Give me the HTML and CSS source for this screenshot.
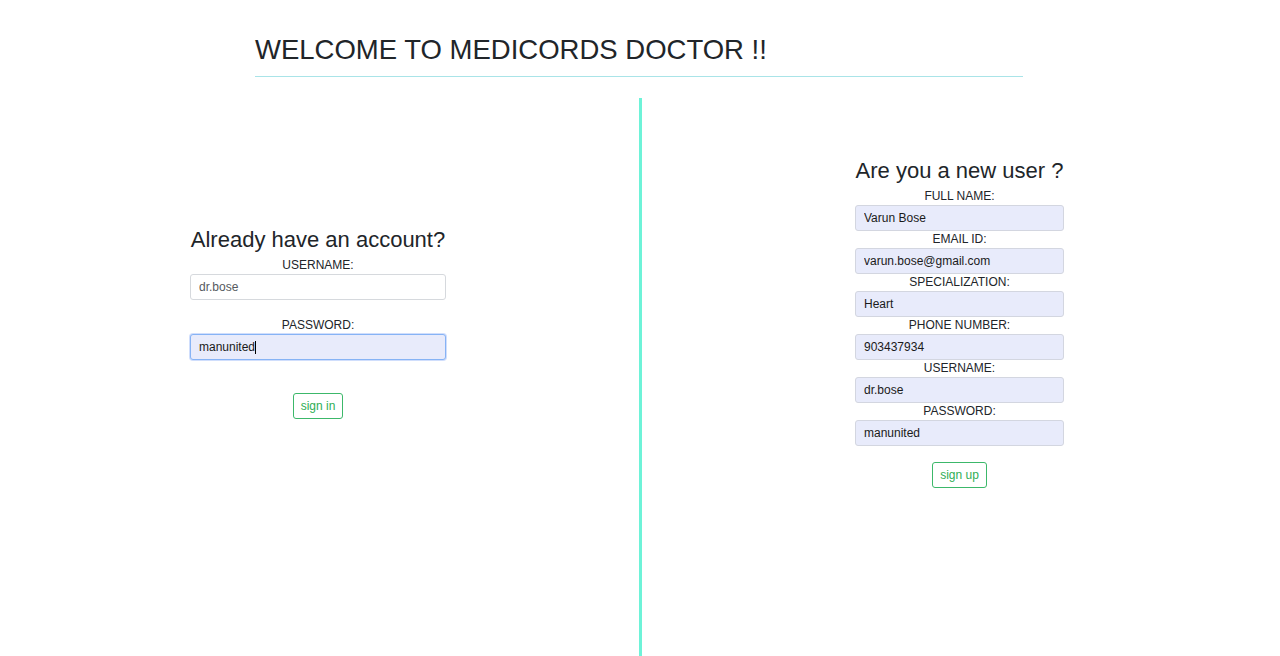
FILE: index.html
```html
<!DOCTYPE html>
<html>
<head>
<meta charset="utf-8">
<title>Medicords Doctor</title>
<link rel="stylesheet" href="styles.css">
</head>
<body>
<header class="header">
  <h1 class="title">WELCOME TO MEDICORDS DOCTOR !!</h1>
</header>
<main class="main">
  <section class="col col-left">
    <form class="form form-login">
      <h2 class="form-title">Already have an account?</h2>
      <label class="label">USERNAME:</label>
      <input class="field field-plain" type="text" value="dr.bose">
      <label class="label label-spaced">PASSWORD:</label>
      <div class="field field-focus">manunited<span class="caret"></span></div>
      <button class="btn btn-login" type="button">sign in</button>
    </form>
  </section>
  <div class="divider"></div>
  <section class="col col-right">
    <form class="form form-signup">
      <h2 class="form-title">Are you a new user ?</h2>
      <label class="label">FULL NAME:</label>
      <input class="field" type="text" value="Varun Bose">
      <label class="label">EMAIL ID:</label>
      <input class="field" type="text" value="varun.bose@gmail.com">
      <label class="label">SPECIALIZATION:</label>
      <input class="field" type="text" value="Heart">
      <label class="label">PHONE NUMBER:</label>
      <input class="field" type="text" value="903437934">
      <label class="label">USERNAME:</label>
      <input class="field" type="text" value="dr.bose">
      <label class="label">PASSWORD:</label>
      <input class="field" type="text" value="manunited">
      <button class="btn btn-signup" type="button">sign up</button>
    </form>
  </section>
</main>
</body>
</html>
```

FILE: styles.css
```css
html, body {
  margin: 0;
  padding: 0;
  background: #ffffff;
  overflow: hidden;
}

body {
  font-family: "Liberation Sans", Arial, sans-serif;
  color: #212529;
}

.header {
  width: 60%;
  margin-left: calc(20% - 1px);
  padding-top: 34px;
  padding-bottom: 10px;
  border-bottom: 1px solid #a9e4e8;
  box-sizing: border-box;
  height: 77px;
}

.title {
  margin: 0;
  font-size: 27.5px;
  line-height: 32px;
  font-weight: 400;
  color: #212529;
}

.main {
  display: flex;
  margin-top: 21px;
  height: 558px;
}

.col {
  height: 450px;
  display: flex;
  align-items: center;
  justify-content: center;
}

.col-left {
  width: 636px;
}

.col-right {
  flex: 1;
  padding-right: 3px;
}

.divider {
  width: 3px;
  height: 558px;
  margin-left: 3px;
  background: #6ef3d8;
}

.form {
  display: flex;
  flex-direction: column;
  align-items: center;
  margin: 0;
}

.form-login {
  width: 256px;
}

.form-signup {
  width: 209px;
}

.form-title {
  margin: 0 0 4px 0;
  font-size: 22px;
  line-height: 26px;
  font-weight: 400;
  color: #212529;
  white-space: nowrap;
}

.label {
  display: block;
  font-size: 12px;
  line-height: 17px;
  color: #212529;
}

.label-spaced {
  margin-top: 17px;
}

.field {
  box-sizing: border-box;
  width: 100%;
  height: 26px;
  margin: 0;
  padding: 0 8px;
  font-family: "Liberation Sans", Arial, sans-serif;
  font-size: 12px;
  line-height: 24px;
  color: #1a1a1a;
  background: #e8ebfb;
  border: 1px solid #d3d6e0;
  border-radius: 3px;
  outline: none;
}

.field-plain {
  background: #ffffff;
  color: #555a60;
  border-color: #d6d9dd;
}

.field-focus {
  border-color: #86b3f5;
  box-shadow: 0 0 0 1px rgba(120, 160, 245, 0.35);
  display: flex;
  align-items: center;
}

.caret {
  display: inline-block;
  width: 1px;
  height: 13px;
  background: #000;
  margin-left: 0;
}

.btn {
  box-sizing: border-box;
  height: 26px;
  padding: 0 7px;
  font-family: "Liberation Sans", Arial, sans-serif;
  font-size: 12px;
  color: #2fae55;
  background: #ffffff;
  border: 1px solid #3cb86a;
  border-radius: 3px;
  cursor: pointer;
}

.btn-login {
  margin-top: 33px;
}

.btn-signup {
  margin-top: 16px;
}
```
